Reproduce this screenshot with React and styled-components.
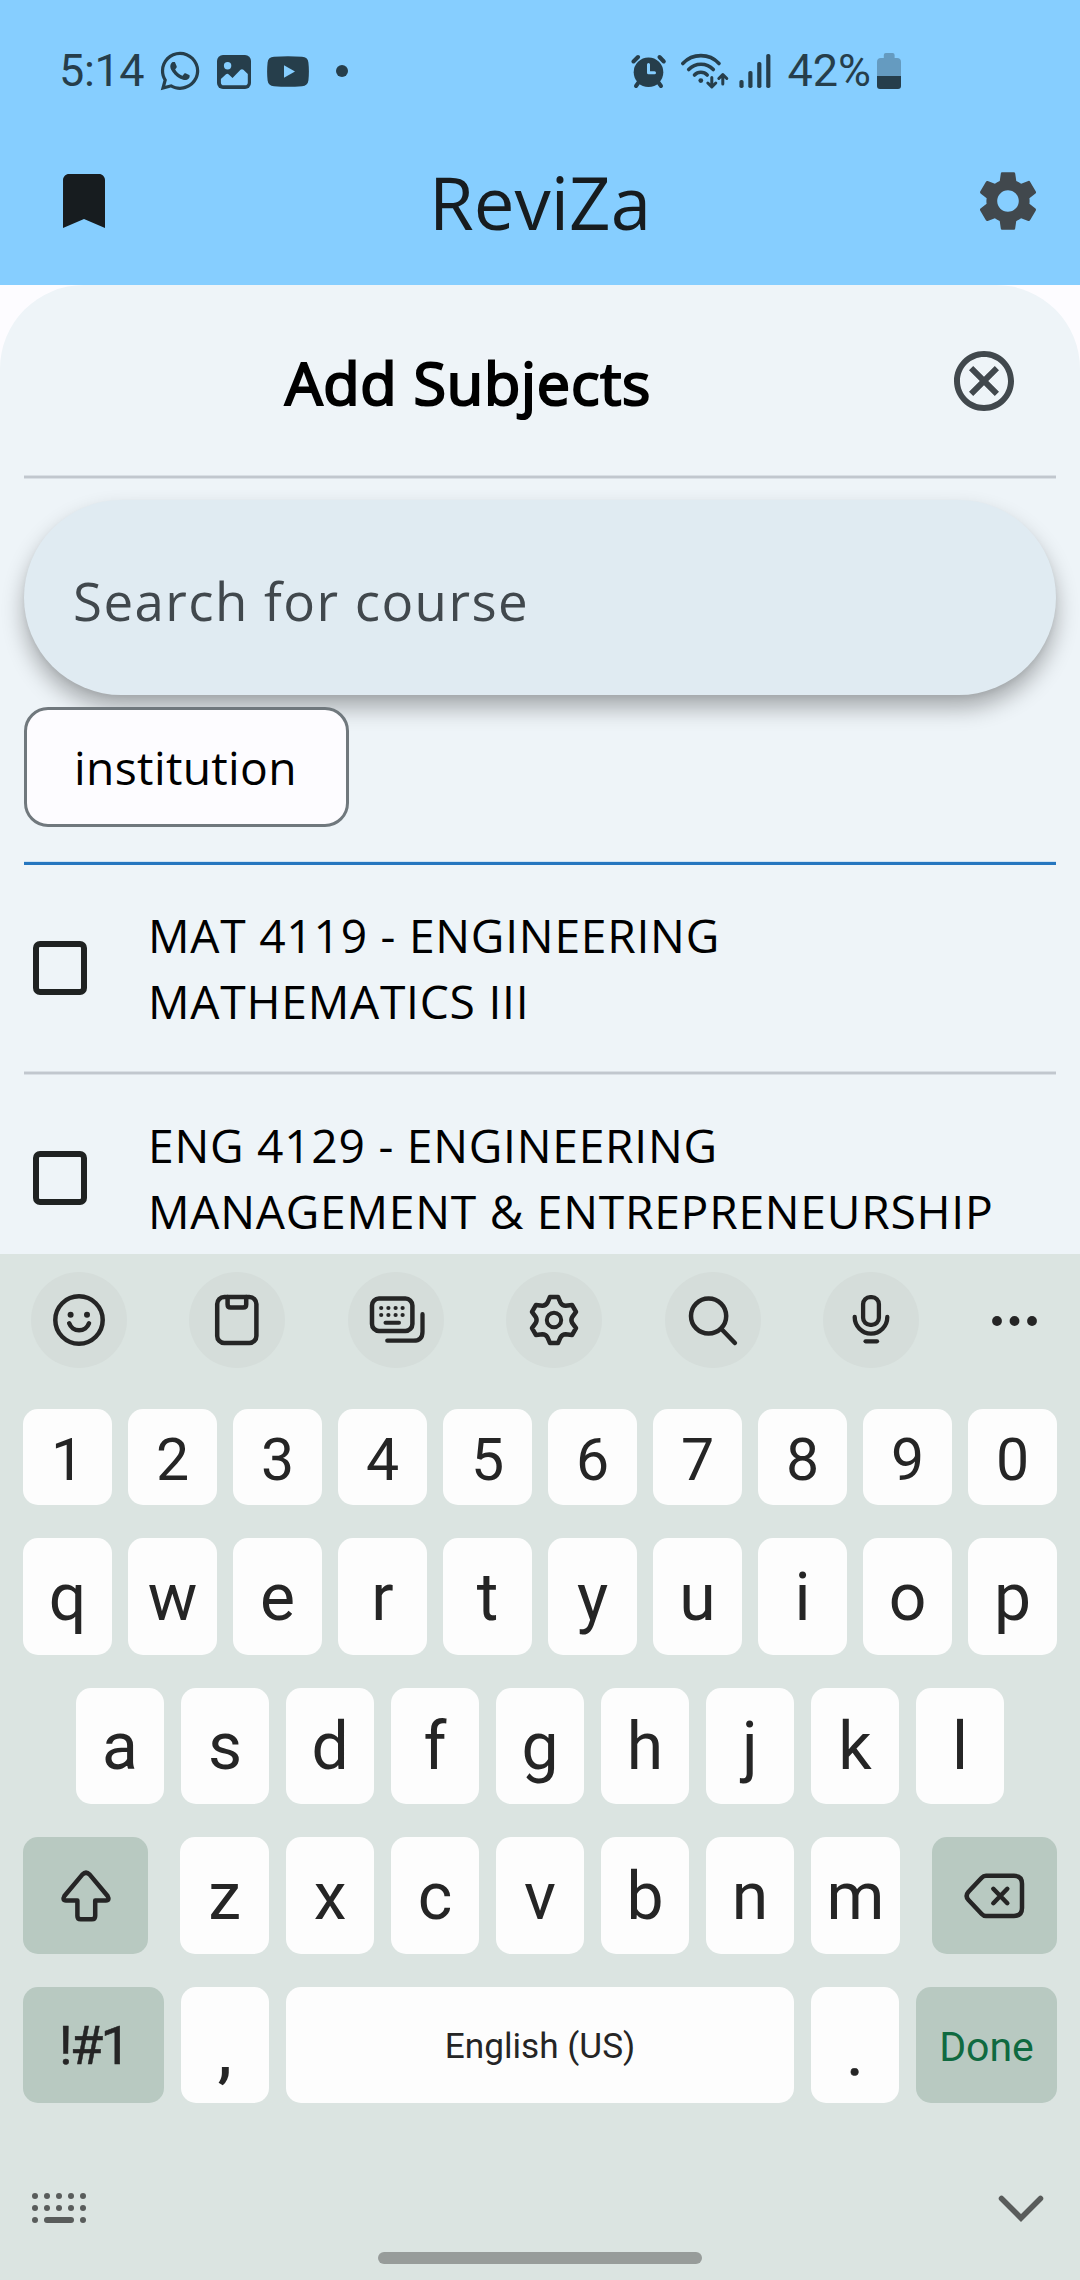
import React from 'react';
import styled, { createGlobalStyle } from 'styled-components';
import { MdBookmark, MdSettings, MdOutlineCancel } from 'react-icons/md';
import { FaWhatsapp } from 'react-icons/fa';

const sky = '#86ceff';
const statusInk = '#263e4b';
const ink = '#252525';

const GlobalStyle = createGlobalStyle`
  *, *::before, *::after { box-sizing: border-box; }
  body { margin: 0; background: #fdfcff; }
  svg { display: block; flex: none; }
  button { border: 0; padding: 0; margin: 0; background: none; font: inherit; color: inherit; }
`;

const Screen = styled.div`
  width: 1080px;
  height: 2280px;
  display: flex;
  flex-direction: column;
  overflow: hidden;
  background: #fdfcff;
  font-family: 'Open Sans', sans-serif;
`;

/* ---------- top ---------- */

const Header = styled.header`
  height: 285px;
  flex: none;
  background: ${sky};
`;

const StatusBar = styled.div`
  height: 142px;
  padding: 0 179px 0 59px;
  display: flex;
  align-items: center;
  justify-content: space-between;
  color: ${statusInk};
`;

const StatusGroup = styled.div`
  display: flex;
  align-items: center;
`;

const StatusItem = styled.span`
  display: flex;
  margin-left: ${(p) => p.$gap}px;
  padding-top: ${(p) => p.$drop || 0}px;
`;

const StatusText = styled.span`
  font: 400 45px/60px Roboto, sans-serif;
  white-space: nowrap;
  letter-spacing: ${(p) => p.$tracking || 0}px;
  margin-left: ${(p) => p.$gap || 0}px;
`;

const AppBar = styled.div`
  height: 118px;
  padding: 0 36px 0 48px;
  display: grid;
  grid-template-columns: 72px 1fr 72px;
  align-items: center;
  color: #41484d;
`;

const AppTitle = styled.h1`
  margin: 0;
  padding: 2px 12px 0 0;
  font-size: 72.6px;
  font-weight: 400;
  line-height: 90px;
  text-align: center;
  color: #171c1f;
`;

const BookmarkButton = styled.button`
  color: #171c1f;
`;

/* ---------- sheet ---------- */

const Sheet = styled.main`
  height: 969px;
  flex: none;
  padding: 0 24px;
  overflow: hidden;
  background: #eef4f8;
  border-radius: 84px 84px 0 0;
`;

const SheetHeader = styled.div`
  height: 190px;
  padding: 2px 36px 0 0;
  display: flex;
  align-items: center;
  color: #41484d;
`;

const SheetTitle = styled.h2`
  flex: 1;
  margin: 0;
  padding: 2px 36px 0 0;
  font-size: 59.4px;
  font-weight: 400;
  line-height: 80px;
  letter-spacing: 0.75px;
  text-align: center;
  color: #000;
  -webkit-text-stroke: 2.2px #000;
`;

const Divider = styled.div`
  height: 4px;
  background: #c1c7ce;
  border: solid #d9dfe5;
  border-width: 1px 0;
`;

const ActiveDivider = styled.div`
  height: 4px;
  margin-top: 34px;
  background: #2576bf;
  border-top: 1px solid #cfe3f4;
`;

const SearchField = styled.div`
  height: 195px;
  margin-top: 21px;
  padding: 6px 49px 0;
  display: flex;
  align-items: center;
  border-radius: 98px;
  background: #e0ebf2;
  box-shadow: 0 13px 22px rgba(0, 0, 0, 0.3), 0 3px 5px rgba(0, 0, 0, 0.05);
  font-size: 52.8px;
  letter-spacing: 1.45px;
  color: #41484d;
`;

const Chip = styled.button`
  width: 325px;
  height: 120px;
  margin-top: 12px;
  padding-right: 2px;
  display: flex;
  align-items: center;
  justify-content: center;
  border: 3px solid #70787d;
  border-radius: 24px;
  background: #fdfcff;
  font-size: 46.2px;
  letter-spacing: 0.33px;
  color: #000;
`;

const CourseRow = styled.label`
  height: 206px;
  padding-left: 9px;
  display: flex;
  align-items: center;
  gap: 61px;
`;

const Checkbox = styled.span`
  width: 54px;
  height: 54px;
  flex: none;
  border: 6px solid #1f2222;
  border-radius: 7px;
`;

const CourseName = styled.span`
  padding-top: 2px;
  font-size: 46.2px;
  line-height: 66px;
  letter-spacing: 0.75px;
  white-space: pre;
  color: #000;
`;

/* ---------- keyboard ---------- */

const Keyboard = styled.section`
  height: 1026px;
  flex: none;
  background: #dbe4e1;
  color: ${ink};
  font-family: Roboto, sans-serif;
`;

const Toolbar = styled.div`
  height: 155px;
  padding: 18px 0 0 31px;
  display: flex;
  gap: 62.4px;
`;

const Tool = styled.button`
  width: ${(p) => (p.$plain ? 67 : 96)}px;
  height: 96px;
  border-radius: 50%;
  display: flex;
  align-items: center;
  justify-content: center;
  background: ${(p) => (p.$plain ? 'transparent' : '#d5ddda')};
`;

const KeyRow = styled.div`
  height: ${(p) => p.$height}px;
  margin-bottom: 33px;
  padding: 0 ${(p) => p.$inset}px;
  display: flex;
  gap: ${(p) => p.$gap}px;
`;

const Key = styled.button`
  flex: ${(p) => (p.$width ? `0 0 ${p.$width}px` : '1 1 0')};
  min-width: 0;
  margin-left: ${(p) => p.$before || 0}px;
  padding-top: ${(p) => p.$drop || 0}px;
  display: flex;
  align-items: center;
  justify-content: center;
  border-radius: 15px;
  background: ${(p) => (p.$tinted ? '#b8c9c1' : '#fdfdfd')};
  color: ${(p) => p.$color || ink};
  font-size: ${(p) => p.$size || 66}px;
  font-weight: ${(p) => p.$weight || 400};
  letter-spacing: ${(p) => p.$tracking || 0}px;
  -webkit-text-stroke: ${(p) => p.$stroke || 0}px currentColor;
  line-height: 1;
  white-space: nowrap;
`;

const BottomBar = styled.div`
  height: 116px;
  padding: 28px 34px 0 29px;
  display: flex;
  align-items: center;
  justify-content: space-between;
  color: #595c5b;
`;

const HomeHandle = styled.div`
  width: 324px;
  height: 12px;
  margin: 0 auto;
  border-radius: 6px;
  background: #979c9a;
`;

/* ---------- icons ---------- */

const line = {
  fill: 'none',
  stroke: 'currentColor',
  strokeWidth: 4.5,
  strokeLinecap: 'round',
  strokeLinejoin: 'round',
};

const PictureIcon = () => (
  <svg width="34" height="34" viewBox="0 0 34 34">
    <rect width="34" height="34" rx="6" fill="currentColor" />
    <circle cx="10.6" cy="10.8" r="3.7" fill={sky} />
    <path d="M3.9 24 L9 19.3 Q10.5 18.3 11.8 19.6 L15.5 23 L23.5 14.8 Q25 13.6 26.4 14.8 L30.8 19 V27.4 Q30.8 30.2 28 30.2 H6.7 Q3.9 30.2 3.9 27.4 Z" fill={sky} />
  </svg>
);

const VideoIcon = () => (
  <svg width="42" height="31" viewBox="0 0 42 31">
    <path d="M7 .8 Q21 -.3 35 .8 Q40.8 1 41.4 6.5 Q42.4 15.5 41.4 24.5 Q40.8 29.8 35 30.2 Q21 31.3 7 30.2 Q1.2 29.8 .6 24.5 Q-.4 15.5 .6 6.5 Q1.2 1 7 .8Z" fill="currentColor" />
    <path d="M17 9.2 L28 15.5 L17 21.8Z" fill={sky} />
  </svg>
);

const DotIcon = () => (
  <svg width="12" height="12"><circle cx="6" cy="6" r="6" fill="currentColor" /></svg>
);

const AlarmIcon = () => (
  <svg width="36" height="36" viewBox="0 0 36 36">
    <circle cx="17.5" cy="19.2" r="14.8" fill="currentColor" />
    <g {...line} strokeWidth="4">
      <path d="M2.5 8.5 L7 4" />
      <path d="M28.5 4 L32.8 8.5" />
      <path d="M7.5 29.5 L5 33" />
      <path d="M27.5 29.5 L30 33" />
    </g>
    <path d="M17.5 11.5 V19.7 H23.5" {...line} stroke={sky} strokeWidth="3" />
  </svg>
);

const WifiIcon = () => (
  <svg width="50" height="38" viewBox="0 0 50 38">
    <g {...line} strokeWidth="3.6">
      <path d="M2.8 11.5 A24.8 24.8 0 0 1 39 11.5" />
      <path d="M8.7 17.5 A16.9 16.9 0 0 1 33.3 17.5" />
      <path d="M14.5 23 A8.8 8.8 0 0 1 27.2 23" />
      <path d="M31.8 25.5 V34.5 M27.8 31 L31.8 35 L35.8 31" strokeWidth="3" />
      <path d="M42.8 32 V22.5 M38.8 26.5 L42.8 22.5 L46.8 26.5" strokeWidth="3" />
    </g>
    <circle cx="20.8" cy="28.6" r="2.4" fill="currentColor" />
  </svg>
);

const SignalIcon = () => (
  <svg width="33" height="36" viewBox="0 0 33 36">
    <g fill="currentColor">
      <rect x=".4" y="27" width="4.2" height="8" rx="1.8" />
      <rect x="9.3" y="18" width="4.2" height="17" rx="1.8" />
      <rect x="18.2" y="9" width="4.2" height="26" rx="1.8" />
      <rect x="27.2" y="1" width="4.2" height="34" rx="1.8" />
    </g>
  </svg>
);

const BatteryIcon = () => (
  <svg width="24" height="36" viewBox="0 0 24 36">
    <path d="M6.8 5 V2 Q6.8 0 8.8 0 H15.6 Q17.6 0 17.6 2 V5 H20 Q24 5 24 9 V23 H0 V9 Q0 5 4 5Z" fill="#659bc0" />
    <path d="M0 23 H24 V33 Q24 36 21 36 H3 Q0 36 0 33Z" fill="currentColor" />
  </svg>
);

const SmileIcon = () => (
  <svg width="96" height="96" viewBox="0 0 96 96">
    <circle cx="48" cy="48" r="23.7" {...line} />
    <circle cx="39.6" cy="42.7" r="3" fill="currentColor" />
    <circle cx="56" cy="42.7" r="3" fill="currentColor" />
    <path d="M38.2 51.3 A10.5 10.5 0 0 0 58 51.3" {...line} />
  </svg>
);

const ClipboardIcon = () => (
  <svg width="96" height="96" viewBox="0 0 96 96">
    <g {...line}>
      <rect x="28.2" y="25" width="39.2" height="46" rx="7" />
      <path d="M38.6 25 V32.5 Q38.6 35.5 41.6 35.5 H54.2 Q57.2 35.5 57.2 32.5 V25" />
    </g>
  </svg>
);

const KeyboardsIcon = () => (
  <svg width="96" height="96" viewBox="0 0 96 96">
    <g {...line}>
      <rect x="24" y="26.5" width="40.4" height="32.5" rx="7" />
      <path d="M37.5 50.7 H51" strokeWidth="4" />
      <path d="M74.5 42.2 V59.7 Q74.5 68.7 65.5 68.7 H39.3" strokeWidth="4.3" />
    </g>
    {[36, 43].map((y) =>
      [33.2, 40.4, 47.6, 54.6].map((x) => (
        <circle key={`${x}-${y}`} cx={x} cy={y} r="2.1" fill="currentColor" />
      ))
    )}
  </svg>
);

// One tooth and the notch after it, repeated every 60 degrees.
const gearPath = (() => {
  const tooth = [[-4, -23.1], [4, -23.1], [6.6, -17.2], [8.3, -14.4], [11.6, -14.3]];
  let d = '';
  for (let i = 0; i < 6; i += 1) {
    const a = (i * Math.PI) / 3;
    const [p0, p1, p2, c, p3] = tooth.map(([x, y]) =>
      `${(48 + x * Math.cos(a) - y * Math.sin(a)).toFixed(2)} ${(48 + x * Math.sin(a) + y * Math.cos(a)).toFixed(2)}`
    );
    d += `${i ? 'L' : 'M'}${p0} L${p1} L${p2} Q${c} ${p3} `;
  }
  return `${d}Z`;
})();

const GearIcon = () => (
  <svg width="96" height="96" viewBox="0 0 96 96">
    <path d={gearPath} {...line} />
    <circle cx="48" cy="48" r="7.2" {...line} strokeWidth="4" />
  </svg>
);

const SearchIcon = () => (
  <svg width="96" height="96" viewBox="0 0 96 96">
    <circle cx="43.6" cy="44" r="17.6" {...line} />
    <path d="M56.9 57.5 L69.9 71" {...line} />
  </svg>
);

const MicIcon = () => (
  <svg width="96" height="96" viewBox="0 0 96 96">
    <g {...line} strokeWidth="4.3">
      <rect x="40.1" y="25.2" width="15.8" height="27.6" rx="7" />
      <path d="M31.7 45 A16.3 16.6 0 0 0 64.3 45" />
      <path d="M42.6 69.3 H54" />
    </g>
  </svg>
);

const MoreIcon = () => (
  <svg width="67" height="96" viewBox="0 0 67 96">
    {[16, 33.5, 51].map((x) => (
      <circle key={x} cx={x} cy="49" r="4.9" fill="currentColor" />
    ))}
  </svg>
);

const ShiftIcon = () => (
  <svg width="60" height="60" viewBox="0 0 60 60">
    <path d="M26.3 8.6 Q30 4.9 33.7 8.6 L51.6 30 Q54 34.4 50 34.4 H39.2 V50 Q39.2 53.3 35.9 53.3 H24.7 Q21.4 53.3 21.4 50 V34.4 H10 Q6 34.4 8.4 30Z" {...line} />
  </svg>
);

const BackspaceIcon = () => (
  <svg width="64" height="50" viewBox="0 0 64 50">
    <g {...line}>
      <path d="M23 4.8 H51 Q59 4.8 59 12.8 V37 Q59 45 51 45 H23 Q20.5 45 18.7 43 L5.5 29 Q1.8 25 5.5 20.8 L18.7 6.8 Q20.5 4.8 23 4.8Z" />
      <path d="M30.3 17.8 L44.3 32.2 M44.3 17.8 L30.3 32.2" />
    </g>
  </svg>
);

const LayoutIcon = () => (
  <svg width="60" height="32" viewBox="0 0 60 32">
    <g fill="currentColor">
      {[4, 16].map((y) => [6, 18, 30, 42, 54].map((x) => <circle key={`${x}-${y}`} cx={x} cy={y} r="3" />))}
      <circle cx="6" cy="28" r="3" />
      <rect x="15" y="25" width="30" height="6" rx="3" />
      <circle cx="54" cy="28" r="3" />
    </g>
  </svg>
);

const ChevronIcon = () => (
  <svg width="50" height="32" viewBox="0 0 50 32">
    <path d="M5.5 6.5 L25 26 L44.5 6.5" {...line} strokeWidth="5.5" strokeLinejoin="miter" />
  </svg>
);

/* ---------- data ---------- */

const courses = [
  'MAT 4119 - ENGINEERING\nMATHEMATICS III',
  'ENG 4129 - ENGINEERING\nMANAGEMENT & ENTREPRENEURSHIP',
];

const tools = [SmileIcon, ClipboardIcon, KeyboardsIcon, GearIcon, SearchIcon, MicIcon];

export default function App() {
  return (
    <>
      <GlobalStyle />
      <Screen>
        <Header>
          <StatusBar>
            <StatusGroup>
              <StatusText $tracking={-0.4}>5:14</StatusText>
              <StatusItem $gap={14}><FaWhatsapp size={44} /></StatusItem>
              <StatusItem $gap={15} $drop={1}><PictureIcon /></StatusItem>
              <StatusItem $gap={16} $drop={1}><VideoIcon /></StatusItem>
              <StatusItem $gap={27}><DotIcon /></StatusItem>
            </StatusGroup>
            <StatusGroup>
              <StatusItem $gap={0}><AlarmIcon /></StatusItem>
              <StatusItem $gap={13}><WifiIcon /></StatusItem>
              <StatusItem $gap={9}><SignalIcon /></StatusItem>
              <StatusText $gap={15}>42%</StatusText>
              <StatusItem $gap={6}><BatteryIcon /></StatusItem>
            </StatusGroup>
          </StatusBar>
          <AppBar>
            <BookmarkButton><MdBookmark size={72} /></BookmarkButton>
            <AppTitle>ReviZa</AppTitle>
            <button><MdSettings size={72} /></button>
          </AppBar>
        </Header>

        <Sheet>
          <SheetHeader>
            <SheetTitle>Add Subjects</SheetTitle>
            <button><MdOutlineCancel size={72} /></button>
          </SheetHeader>
          <Divider />
          <SearchField>Search for course</SearchField>
          <Chip>institution</Chip>
          <ActiveDivider />
          {courses.map((name, i) => (
            <React.Fragment key={name}>
              {i > 0 && <Divider />}
              <CourseRow>
                <Checkbox />
                <CourseName>{name}</CourseName>
              </CourseRow>
            </React.Fragment>
          ))}
        </Sheet>

        <Keyboard>
          <Toolbar>
            {tools.map((Icon, i) => (
              <Tool key={i}><Icon /></Tool>
            ))}
            <Tool $plain><MoreIcon /></Tool>
          </Toolbar>
          <KeyRow $height={96} $inset={23} $gap={16}>
            {[...'1234567890'].map((k) => <Key key={k} $size={59} $drop={4}>{k}</Key>)}
          </KeyRow>
          <KeyRow $height={117} $inset={23} $gap={16}>
            {[...'qwertyuiop'].map((k) => <Key key={k} $drop={2}>{k}</Key>)}
          </KeyRow>
          <KeyRow $height={116} $inset={76} $gap={17}>
            {[...'asdfghjkl'].map((k) => <Key key={k} $drop={1}>{k}</Key>)}
          </KeyRow>
          <KeyRow $height={117} $inset={23} $gap={17}>
            <Key $width={125} $tinted><ShiftIcon /></Key>
            {[...'zxcvbnm'].map((k) => (
              <Key key={k} $width={k === 'z' || k === 'm' ? 89 : 88} $before={k === 'z' ? 15 : 0} $drop={2}>{k}</Key>
            ))}
            <Key $width={125} $before={15} $tinted><BackspaceIcon /></Key>
          </KeyRow>
          <KeyRow $height={116} $inset={23} $gap={17}>
            <Key $width={141} $size={54} $drop={2} $tracking={-2.6} $stroke={0.5} $tinted>!#1</Key>
            <Key $width={88} $drop={16} $weight={500}>,</Key>
            <Key $size={35.2} $drop={4}>English (US)</Key>
            <Key $width={88} $drop={16} $stroke={0.6}>.</Key>
            <Key $width={141} $size={41} $drop={4} $color="#0f6a40" $tinted>Done</Key>
          </KeyRow>
          <BottomBar>
            <LayoutIcon />
            <ChevronIcon />
          </BottomBar>
          <HomeHandle />
        </Keyboard>
      </Screen>
    </>
  );
}
